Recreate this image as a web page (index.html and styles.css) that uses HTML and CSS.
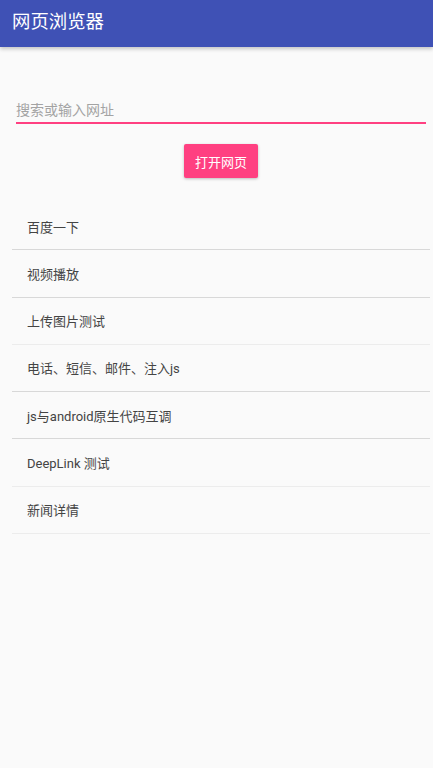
FILE: index.html
```html
<!DOCTYPE html>
<html lang="zh-CN">
<head>
<meta charset="utf-8">
<title>网页浏览器</title>
<link rel="stylesheet" href="styles.css">
</head>
<body>
<header class="appbar"><span class="title">网页浏览器</span></header>
<main class="content">
  <div class="form">
    <input class="url" type="text" placeholder="搜索或输入网址">
    <button class="open" type="button">打开网页</button>
  </div>
  <ul class="list">
    <li class="item">百度一下</li>
    <li class="item">视频播放</li>
    <li class="item light">上传图片测试</li>
    <li class="item">电话、短信、邮件、注入js</li>
    <li class="item">js与android原生代码互调</li>
    <li class="item light">DeepLink 测试</li>
    <li class="item light">新闻详情</li>
  </ul>
</main>
</body>
</html>
```
FILE: styles.css
```css
html, body {
  margin: 0;
  padding: 0;
  background: #fafafa;
  font-family: Roboto, "Noto Sans CJK SC", sans-serif;
}
.appbar {
  height: 47px;
  background: #3f51b5;
  display: flex;
  align-items: center;
  padding-left: 12px;
  box-shadow: 0 2px 4px rgba(0, 0, 0, 0.22);
  position: relative;
}
.title {
  color: #ffffff;
  font-size: 18.4px;
  line-height: 1;
  margin-top: -2px;
}
.content {
  display: flex;
  flex-direction: column;
}
.form {
  margin: 51px 7px 0 16px;
  display: flex;
  flex-direction: column;
  align-items: center;
}
.url {
  box-sizing: border-box;
  width: 100%;
  height: 26px;
  border: none;
  border-bottom: 2px solid #ff4081;
  background: transparent;
  padding: 0;
  font-family: Roboto, "Noto Sans CJK SC", sans-serif;
  font-size: 14px;
  outline: none;
}
.url::placeholder {
  color: #a3a3a3;
}
.open {
  margin-top: 20px;
  width: 74px;
  height: 34px;
  border: none;
  border-radius: 2px;
  background: #ff4081;
  color: #ffffff;
  font-family: Roboto, "Noto Sans CJK SC", sans-serif;
  font-size: 13px;
  padding: 0;
  box-shadow: 0 1px 3px rgba(0, 0, 0, 0.25);
}
.list {
  list-style: none;
  margin: 25px 3px 0 12px;
  padding: 0;
}
.item {
  box-sizing: border-box;
  height: 47.28px;
  display: flex;
  align-items: center;
  padding-left: 15px;
  border-bottom: 1px solid #d8d8d8;
  font-size: 13px;
  color: #444444;
}
.item.light {
  border-bottom-color: #ececec;
}
```
